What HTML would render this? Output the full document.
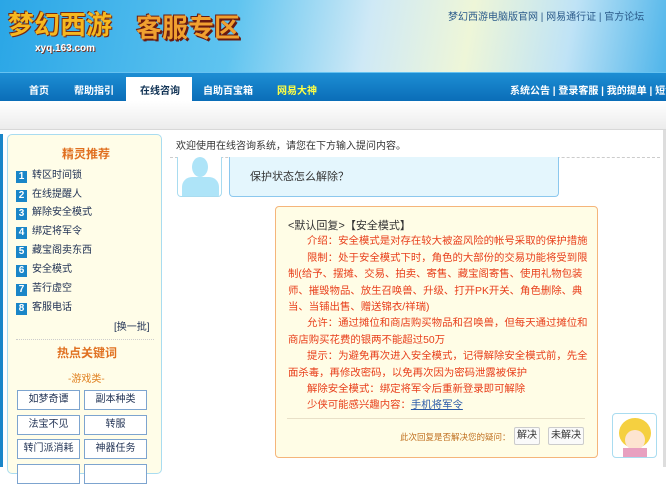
<!DOCTYPE html>
<html><head><meta charset="utf-8"><style>
*{margin:0;padding:0;box-sizing:border-box}
body{width:666px;height:467px;overflow:hidden;position:relative;background:#fff;font:12px "Liberation Sans","Noto Sans CJK SC",sans-serif;color:#333}
.a{position:absolute}
#hdr{left:0;top:0;width:666px;height:72px;background:linear-gradient(100deg,#2aa6e6 0%,#5fc4f0 35%,#cfe9f6 55%,#eef6d8 70%,#bfe3f6 85%,#4fb5ea 100%)}
#nav{left:0;top:72px;width:666px;height:29px;background:linear-gradient(#1d8ed4,#0a6db8);border-top:1px solid #66c2f0}
#nav span{position:absolute;top:9px;color:#fff;font-weight:bold;font-size:10px;white-space:nowrap}
#strip{left:0;top:101px;width:666px;height:29px;background:linear-gradient(#fff,#ececec);border-bottom:1px solid #d8d8d8}
#lp{left:7px;top:134px;width:155px;height:340px;background:#fffde8;border:1px solid #a9dcf0;border-radius:5px}
.it{position:absolute;left:16px;font-size:10px;color:#235}
.it b{display:inline-block;width:11px;height:12px;background:#1a86c8;color:#fff;font-size:10px;text-align:center;line-height:12px;margin-right:5px;vertical-align:-1px}
.bt{position:absolute;width:63px;height:20px;border:1px solid #7da4cf;background:#fff;color:#235;font-size:10px;text-align:center;line-height:18px}
.r{color:#e8401c}
#rp div{white-space:nowrap;height:16.4px}
.i{padding-left:19px}
</style></head><body>
<div class="a" id="hdr"></div>
<div class="a" style="left:8px;top:5px;font:bold 26px 'Noto Sans CJK SC',sans-serif;color:#f5b820;text-shadow:1px 1px 0 #7a2a10,-1px -1px 0 #7a2a10">梦幻西游</div>
<div class="a" style="left:35px;top:43px;font:bold 10px 'Liberation Sans';color:#fff;text-shadow:1px 1px 0 #732">xyq.163.com</div>
<div class="a" style="left:136px;top:8px;font:bold 26px 'Noto Sans CJK SC',sans-serif;color:#f0a030;text-shadow:1px 1px 0 #6a1a10,-1px -1px 0 #6a1a10,2px 2px 0 #6a1a10">客服专区</div>
<div class="a" style="left:448px;top:8px;font-size:10px;color:#2a5a8a">梦幻西游电脑版官网 | 网易通行证 | 官方论坛</div>
<div class="a" id="nav">
<span style="left:29px">首页</span><span style="left:74px">帮助指引</span>
<div class="a" style="left:126px;top:4px;width:66px;height:25px;background:#fff"></div>
<span style="left:140px;color:#135">在线咨询</span><span style="left:203px">自助百宝箱</span><span style="left:277px;color:#ff4">网易大神</span>
<span style="left:510px">系统公告 | 登录客服 | 我的提单 | 短消</span></div>
<div class="a" id="strip"></div>
<div class="a" style="left:0;top:134px;width:3px;height:333px;background:#1a86c8"></div>
<div class="a" id="lp"></div>
<div class="a" style="left:62px;top:145px;font-weight:bold;color:#e07020">精灵推荐</div>
<div class="it" style="top:166px"><b>1</b>转区时间锁</div>
<div class="it" style="top:185px"><b>2</b>在线提醒人</div>
<div class="it" style="top:203px"><b>3</b>解除安全模式</div>
<div class="it" style="top:222px"><b>4</b>绑定将军令</div>
<div class="it" style="top:241px"><b>5</b>藏宝阁卖东西</div>
<div class="it" style="top:260px"><b>6</b>安全模式</div>
<div class="it" style="top:279px"><b>7</b>苦行虚空</div>
<div class="it" style="top:298px"><b>8</b>客服电话</div>
<div class="a" style="left:114px;top:318px;font-size:10px;color:#235">[换一批]</div>
<div class="a" style="left:16px;top:339px;width:138px;border-top:1px dotted #ccc"></div>
<div class="a" style="left:57px;top:344px;font-weight:bold;color:#e07020">热点关键词</div>
<div class="a" style="left:68px;top:370px;font-size:10px;color:#e08020">-游戏类-</div>
<div class="bt" style="left:17px;top:390px">如梦奇谭</div><div class="bt" style="left:84px;top:390px">副本种类</div>
<div class="bt" style="left:17px;top:415px">法宝不见</div><div class="bt" style="left:84px;top:415px">转服</div>
<div class="bt" style="left:17px;top:439px">转门派消耗</div><div class="bt" style="left:84px;top:439px">神器任务</div>
<div class="bt" style="left:17px;top:464px"></div><div class="bt" style="left:84px;top:464px"></div>
<div class="a" style="left:176px;top:137px;font-size:10px;color:#333">欢迎使用在线咨询系统，请您在下方输入提问内容。</div>
<div class="a" style="left:170px;top:157px;width:490px;border-top:1px dashed #ccc"></div>
<div class="a" style="left:663px;top:130px;width:3px;height:337px;background:#ddd"></div>
<div class="a" style="left:177px;top:157px;width:45px;height:40px;border:1px solid #a9dcf0;border-top:none;border-radius:0 0 4px 4px;background:#fff;overflow:hidden"><div class="a" style="left:14px;top:0;width:16px;height:20px;background:#aee4f8;border-radius:50%"></div><div class="a" style="left:4px;top:20px;width:37px;height:22px;background:#aee4f8;border-radius:10px 10px 0 0"></div></div>
<div class="a" style="left:229px;top:157px;width:330px;height:40px;background:#e4f6fd;border:1px solid #8cc8ee;border-top:none;border-radius:0 0 4px 4px"></div>
<div class="a" style="left:250px;top:168px;color:#333;font-size:11px">保护状态怎么解除？</div>
<div class="a" style="left:275px;top:206px;width:323px;height:252px;background:#fffde6;border:1px solid #f5b57a;border-radius:4px"></div>
<div class="a" id="rp" style="left:288px;top:218px;width:300px;line-height:16.4px;font-size:10.4px">
<div style="font-size:11px">&lt;默认回复&gt;【安全模式】</div>
<div class="r i">介绍：安全模式是对存在较大被盗风险的帐号采取的保护措施</div>
<div class="r i">限制：处于安全模式下时，角色的大部份的交易功能将受到限</div>
<div class="r">制(给予、摆摊、交易、拍卖、寄售、藏宝阁寄售、使用礼物包装</div>
<div class="r">师、摧毁物品、放生召唤兽、升级、打开PK开关、角色删除、典</div>
<div class="r">当、当铺出售、赠送锦衣/祥瑞)</div>
<div class="r i">允许：通过摊位和商店购买物品和召唤兽，但每天通过摊位和</div>
<div class="r">商店购买花费的银两不能超过50万</div>
<div class="r i">提示：为避免再次进入安全模式，记得解除安全模式前，先全</div>
<div class="r">面杀毒，再修改密码，以免再次因为密码泄露被保护</div>
<div class="r i">解除安全模式：绑定将军令后重新登录即可解除</div>
<div class="r i">少侠可能感兴趣内容：<u style="color:#2a5aa8">手机将军令</u></div></div>
<div class="a" style="left:287px;top:418px;width:298px;border-top:1px solid #e8e0c8"></div>
<div class="a" style="left:400px;top:431px;font-size:8.5px;color:#c07020;white-space:nowrap">此次回复是否解决您的疑问：</div>
<div class="a" style="left:514px;top:427px;width:26px;height:18px;border:1px solid #ccc;border-radius:2px;background:#fafafa;font-size:10px;text-align:center;line-height:16px">解决</div>
<div class="a" style="left:548px;top:427px;width:36px;height:18px;border:1px solid #ccc;border-radius:2px;background:#fafafa;font-size:10px;text-align:center;line-height:16px">未解决</div>
<div class="a" style="left:612px;top:413px;width:45px;height:45px;border:1px solid #a9dcf0;border-radius:4px;background:#fff;overflow:hidden"><div class="a" style="left:6px;top:4px;width:32px;height:30px;background:#f5d040;border-radius:50%"></div><div class="a" style="left:12px;top:16px;width:20px;height:20px;background:#fde4d0;border-radius:50%"></div><div class="a" style="left:10px;top:34px;width:24px;height:12px;background:#e8a0c0"></div></div>
</body></html>
